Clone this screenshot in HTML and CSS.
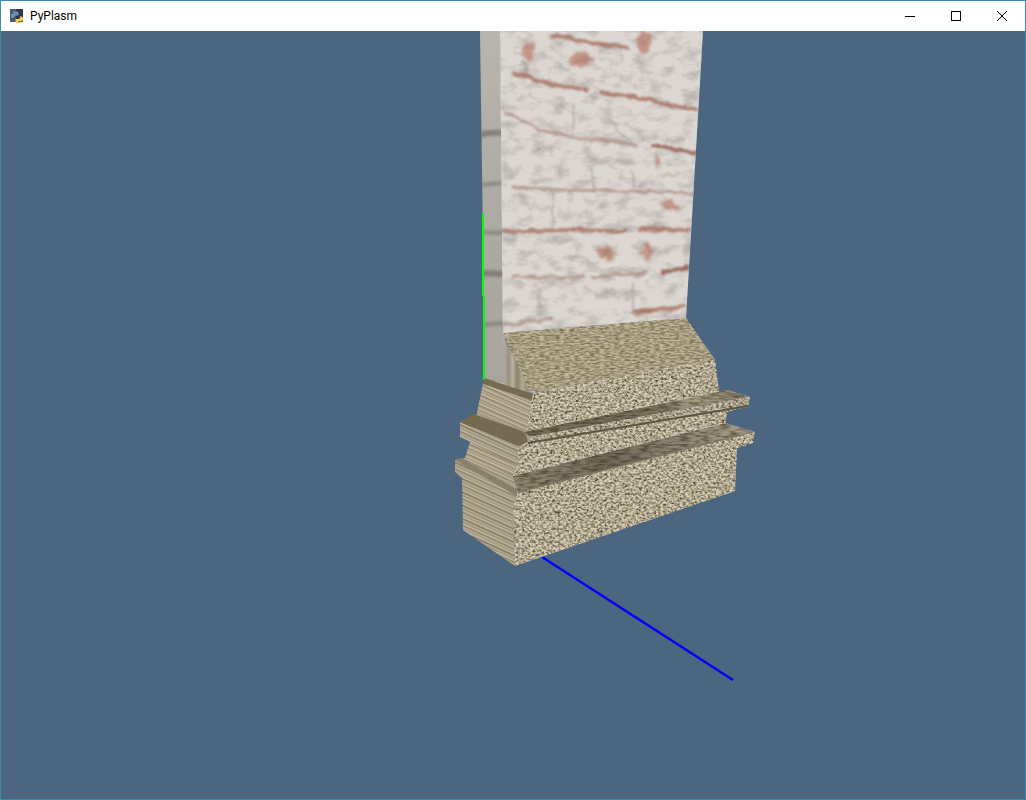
FILE: index.html
```html
<!DOCTYPE html>
<html lang="en">
<head>
<meta charset="utf-8">
<title>PyPlasm</title>
<link rel="stylesheet" href="styles.css">
</head>
<body>
<div class="window">
  <header class="titlebar">
    <svg class="app-icon" width="16" height="16" viewBox="0 0 16 16">
      <rect x="1" y="1" width="13" height="13" rx="1" fill="#27384f"/>
      <rect x="1" y="1" width="6" height="13" fill="#4a5a6e"/>
      <path d="M4 3.500h4a1.500 1.500 0 0 1 1.500 1.500v2.500H6.500A1.500 1.500 0 0 0 5 9v1H3.500A1.500 1.500 0 0 1 2 8.500V7a1.500 1.500 0 0 1 1.500-1.500H7V5H4z" fill="#6f93b8"/>
      <path d="M12 15H8a1.500 1.500 0 0 1-1.500-1.500V11h3A1.500 1.500 0 0 0 11 9.500V8.500h1.500A1.500 1.500 0 0 1 14 10v1.500a1.500 1.500 0 0 1-1.500 1.500H9v.5h3z" fill="#f4cf4e"/>
    </svg>
    <span class="title">PyPlasm</span>
    <div class="controls">
      <div class="control"><svg width="12" height="12" viewBox="0 0 12 12"><path d="M1 6.500h10" stroke="#000" fill="none"/></svg></div>
      <div class="control"><svg width="12" height="12" viewBox="0 0 12 12"><rect x="1.500" y="1.500" width="9" height="9" stroke="#000" fill="none"/></svg></div>
      <div class="control"><svg width="12" height="12" viewBox="0 0 12 12"><path d="M1 1l10 10M11 1L1 11" stroke="#000" fill="none"/></svg></div>
    </div>
  </header>
  <main class="viewport">
    <svg class="scene" width="1024" height="768" viewBox="1 31 1024 768">
      <defs>
        <filter id="stone" filterUnits="userSpaceOnUse" x="440" y="300" width="330" height="280" color-interpolation-filters="sRGB">
          <feTurbulence type="fractalNoise" baseFrequency="0.36 0.46" numOctaves="2" seed="7" result="n"/>
          <feColorMatrix in="n" type="matrix" values="1.250 0 0 0 0.2  1.250 0 0 0 0.19  1.250 0 0 0 0.17  0 0 0 0 1" result="g"/>
          <feBlend in="SourceGraphic" in2="g" mode="multiply" result="b"/>
          <feTurbulence type="fractalNoise" baseFrequency="0.28 0.33" numOctaves="2" seed="21" result="m"/>
          <feColorMatrix in="m" type="matrix" values="0 0 0 0 0.36  0 0 0 0 0.3  0 0 0 0 0.2  7 0 0 0 -4.550" result="speck"/>
          <feMerge result="t"><feMergeNode in="b"/><feMergeNode in="speck"/></feMerge>
          <feComposite in="t" in2="SourceGraphic" operator="in"/>
        </filter>
        <filter id="washtex" filterUnits="userSpaceOnUse" x="440" y="300" width="330" height="280" color-interpolation-filters="sRGB">
          <feTurbulence type="fractalNoise" baseFrequency="0.2 0.6" numOctaves="2" seed="5" result="n"/>
          <feColorMatrix in="n" type="matrix" values="0.8 0 0 0 0.45  0.8 0 0 0 0.44  0.8 0 0 0 0.42  0 0 0 0 1" result="g"/>
          <feBlend in="SourceGraphic" in2="g" mode="multiply" result="b"/>
          <feComposite in="b" in2="SourceGraphic" operator="in"/>
        </filter>
        <filter id="strip" filterUnits="userSpaceOnUse" x="440" y="300" width="330" height="280" color-interpolation-filters="sRGB">
          <feTurbulence type="fractalNoise" baseFrequency="0.1 0.45" numOctaves="2" seed="3" result="n"/>
          <feColorMatrix in="n" type="matrix" values="1 0 0 0 0.4  1 0 0 0 0.39  1 0 0 0 0.37  0 0 0 0 1" result="g"/>
          <feBlend in="SourceGraphic" in2="g" mode="multiply" result="b"/>
          <feComposite in="b" in2="SourceGraphic" operator="in"/>
        </filter>
        <filter id="plaster" filterUnits="userSpaceOnUse" x="495" y="31" width="215" height="310" color-interpolation-filters="sRGB">
          <feTurbulence type="fractalNoise" baseFrequency="0.06 0.09" numOctaves="3" seed="11" result="n"/>
          <feColorMatrix in="n" type="matrix" values="0.42 0 0 0 0.77  0.42 0 0 0 0.765  0.42 0 0 0 0.76  0 0 0 0 1" result="g"/>
          <feBlend in="SourceGraphic" in2="g" mode="multiply" result="b"/>
          <feComposite in="b" in2="SourceGraphic" operator="in"/>
        </filter>
        <filter id="rough" filterUnits="userSpaceOnUse" x="495" y="25" width="215" height="320">
          <feTurbulence type="fractalNoise" baseFrequency="0.09" numOctaves="2" seed="4" result="w"/>
          <feDisplacementMap in="SourceGraphic" in2="w" scale="6" xChannelSelector="R" yChannelSelector="G"/>
          <feGaussianBlur stdDeviation="1"/>
        </filter>
        <filter id="roughblur" filterUnits="userSpaceOnUse" x="495" y="25" width="215" height="320">
          <feTurbulence type="fractalNoise" baseFrequency="0.12" numOctaves="2" seed="9" result="w"/>
          <feDisplacementMap in="SourceGraphic" in2="w" scale="12" xChannelSelector="R" yChannelSelector="G"/>
          <feGaussianBlur stdDeviation="1.500"/>
        </filter>
        <filter id="blur1" filterUnits="userSpaceOnUse" x="470" y="25" width="50" height="360"><feGaussianBlur stdDeviation="1.500"/></filter>
        <clipPath id="wallclip"><polygon points="500,31 703,31 686,318 503,333"/></clipPath>
        <clipPath id="sideclip"><polygon points="480,31 500,31 505,340 507,382 485,380"/></clipPath>
        <linearGradient id="sidegrad" x1="0" y1="31" x2="0" y2="380" gradientUnits="userSpaceOnUse">
          <stop offset="0" stop-color="#b9b5ad"/>
          <stop offset=".5" stop-color="#aeaba4"/>
          <stop offset="1" stop-color="#a8a59f"/>
        </linearGradient>
        <linearGradient id="vstripes" x1="503" y1="0" x2="531" y2="0" gradientUnits="userSpaceOnUse">
          <stop offset="0" stop-color="#b9b2a0"/>
          <stop offset=".2" stop-color="#989080"/>
          <stop offset=".35" stop-color="#bdb29a"/>
          <stop offset=".5" stop-color="#8a826e"/>
          <stop offset=".7" stop-color="#b3a990"/>
          <stop offset=".85" stop-color="#988e78"/>
          <stop offset="1" stop-color="#a99f86"/>
        </linearGradient>
        <linearGradient id="stripe1" x1="0" y1="0" x2="-4" y2="9" gradientUnits="userSpaceOnUse" spreadMethod="repeat">
          <stop offset="0" stop-color="#ada287"/>
          <stop offset=".15" stop-color="#c3b89f"/>
          <stop offset=".28" stop-color="#938870"/>
          <stop offset=".42" stop-color="#b9ae94"/>
          <stop offset=".55" stop-color="#a1967c"/>
          <stop offset=".7" stop-color="#cbc1a8"/>
          <stop offset=".85" stop-color="#8f846b"/>
          <stop offset="1" stop-color="#ada287"/>
        </linearGradient>
        <linearGradient id="stripe2" x1="0" y1="0" x2="-5" y2="11" gradientUnits="userSpaceOnUse" spreadMethod="repeat">
          <stop offset="0" stop-color="#a59b85"/>
          <stop offset=".12" stop-color="#bfb69e"/>
          <stop offset=".25" stop-color="#7f7561"/>
          <stop offset=".38" stop-color="#b7ad95"/>
          <stop offset=".5" stop-color="#9a907a"/>
          <stop offset=".62" stop-color="#c3baa3"/>
          <stop offset=".75" stop-color="#8d836d"/>
          <stop offset=".88" stop-color="#b3a890"/>
          <stop offset="1" stop-color="#a59b85"/>
        </linearGradient>
        <linearGradient id="ledgegrad" x1="518" y1="0" x2="755" y2="0" gradientUnits="userSpaceOnUse">
          <stop offset="0" stop-color="#8d8470"/>
          <stop offset=".28" stop-color="#7e7663"/>
          <stop offset=".34" stop-color="#6f6756"/>
          <stop offset=".7" stop-color="#8f8775"/>
          <stop offset="1" stop-color="#a89f8a"/>
        </linearGradient>
        <linearGradient id="capgrad" x1="523" y1="0" x2="750" y2="0" gradientUnits="userSpaceOnUse">
          <stop offset="0" stop-color="#766b56"/>
          <stop offset=".6" stop-color="#7b715c"/>
          <stop offset=".75" stop-color="#a89d84"/>
          <stop offset="1" stop-color="#857b66"/>
        </linearGradient>
      </defs>

      <!-- wall side -->
      <polygon points="480,31 500,31 505,340 507,382 485,380" fill="url(#sidegrad)"/>
      <g clip-path="url(#sideclip)">
        <g filter="url(#blur1)">
          <path class="side-band" d="M478 135Q490 132 504 133"/>
          <path class="side-band thin" d="M478 185L504 183"/>
          <path class="side-band thin" d="M478 232L504 233"/>
          <path class="side-band" d="M478 273L504 274"/>
          <path class="side-band thin" d="M478 325L506 323"/>
        </g>
      </g>

      <!-- axes -->
      <path class="axis-green" d="M482.500 213V296M483.500 296V380"/>
      <path class="axis-blue" d="M542 557L733 680"/>

      <!-- wall front -->
      <polygon class="wall" points="500,31 703,31 686,318 503,333" filter="url(#plaster)"/>
      <g clip-path="url(#wallclip)">
        <g class="stains" filter="url(#roughblur)">
          <ellipse cx="529" cy="50" rx="7" ry="10"/>
          <ellipse cx="644" cy="42" rx="8" ry="11"/>
          <ellipse cx="581" cy="60" rx="11" ry="7"/>
          <ellipse cx="670" cy="206" rx="9" ry="5"/>
          <ellipse cx="606" cy="252" rx="9" ry="7"/>
          <ellipse cx="648" cy="251" rx="6" ry="9"/>
          <ellipse cx="657" cy="162" rx="3" ry="6"/>
          <ellipse cx="645" cy="312" rx="10" ry="3"/>
          <ellipse cx="655" cy="230" rx="12" ry="2"/>
        </g>
        <g class="mortar" filter="url(#rough)">
          <path d="M553 35L590 42L627 48"/>
          <path d="M515 73L550 84L587 90"/>
          <path d="M602 92L650 100L697 110"/>
          <path class="faint" d="M507 113L540 130L573 137L637 145"/>
          <path class="dark" d="M653 146L695 152"/>
          <path class="faint" d="M513 187L560 190L620 191L693 193"/>
          <path d="M502 232L560 230L627 231"/>
          <path d="M640 229L690 230"/>
          <path class="faint" d="M513 277L583 277"/>
          <path class="faint" d="M593 277L647 273"/>
          <path class="dark" d="M663 272L688 267"/>
          <path class="faint" d="M503 325L553 318"/>
          <path d="M633 312L685 307"/>
          <path class="thin" d="M553 193L553 227"/>
          <path class="thin" d="M633 283L633 313"/>
          <path class="thin" d="M540 287L540 317"/>
          <path class="thin" d="M575 105L572 130"/>
          <path class="thin" d="M524 60L528 75"/>
          <path class="thin" d="M632 170L635 187"/>
          <path class="thin" d="M590 170L596 188"/>
          <path class="thin" d="M610 120L625 140"/>
        </g>
      </g>

      <!-- pedestal: side faces -->
      <polygon points="503,335 531,393 485,380 507,382" fill="url(#vstripes)"/>
      <polygon class="under" points="485,380 533,397 530,442 520,447 518,466 512,478 470,442"/>
      <polygon points="483,383 533,400 527,432 477,413" fill="url(#stripe1)"/>
      <polygon points="476,425 525,445 519,466 470,442" fill="url(#stripe1)"/>
      <polygon points="470,442 520,465 512,478 465,458" fill="url(#stripe1)"/>
      <polygon points="460,422 520,447 518,466 460,437" fill="url(#stripe2)"/>
      <polygon points="465,458 512,475 518,492 455,460" fill="url(#stripe2)"/>
      <polygon points="455,460 518,492 513,508 515,566 463,530 462,478 455,472" fill="url(#stripe2)"/>
      <polygon class="ledge-dark" points="485,378 534,395 534,401 483,384"/>
      <polygon class="ledge-dark" points="460,422 473,414 525,432 528,442 520,447"/>
      <polygon class="ledge-mid" points="455,460 460,458 519,490 518,497"/>

      <!-- pedestal: front faces, back to front -->
      <polygon class="wash" points="503,333 686,318 715,360 667,370 531,393 530,392" filter="url(#washtex)"/>
      <g filter="url(#stone)">
        <polygon class="face" points="533,393 667,368 715,360 719,392 727,392 527,432"/>
        <polygon class="face" points="518,447 530,441 748,406 727,412 725,425 512,478 518,465"/>
        <polygon class="face" points="518,491 755,431 753,443 737,448 735,491 515,566 513,508"/>
      </g>
      <g filter="url(#strip)">
        <polygon fill="url(#capgrad)" points="523,432 727,390 750,397 530,437"/>
        <polygon fill="url(#ledgegrad)" points="512,476 725,423 755,432 518,492"/>
      </g>
      <polygon class="face-band" points="530,437 750,397 748,407 530,442" filter="url(#stone)"/>
      <polygon class="strip-line" points="528,442 748,405 748,407 528,444"/>
      <polygon class="strip-line soft" points="518,491 755,431 755,432 518,493"/>
    </svg>
  </main>
</div>
</body>
</html>
```

FILE: styles.css
```css
html, body {
  margin: 0;
  height: 100%;
  overflow: hidden;
}

.window {
  box-sizing: border-box;
  width: 1026px;
  height: 800px;
  display: flex;
  flex-direction: column;
  border: 1px solid #3b8dab;
  background: #4c6680;
}

.titlebar {
  height: 30px;
  flex: none;
  display: flex;
  align-items: center;
  background: #fff;
  font: 12px Roboto, "Liberation Sans", sans-serif;
  color: #000;
}

.app-icon {
  margin-left: 8px;
  flex: none;
}

.title {
  margin-left: 5px;
}

.controls {
  margin-left: auto;
  display: flex;
  height: 100%;
}

.control {
  width: 46px;
  display: flex;
  align-items: center;
  justify-content: center;
}

.viewport {
  flex: 1;
  min-height: 0;
  background: #4c6680;
}

.scene {
  display: block;
}

.axis-green {
  fill: none;
  stroke: #00ff00;
  stroke-width: 2;
  shape-rendering: crispEdges;
}

.axis-blue {
  fill: none;
  stroke: #0000ff;
  stroke-width: 2.500;
}

.side-band {
  fill: none;
  stroke: #6f6a66;
  stroke-width: 6;
  opacity: .7;
}

.side-band.thin {
  stroke-width: 4;
  opacity: .55;
}

.wall {
  fill: #dcd7d3;
}

.stains {
  fill: #a8543f;
  opacity: .5;
}

.mortar {
  fill: none;
  stroke: #a5705f;
  stroke-width: 4;
  stroke-linecap: round;
  opacity: .8;
}

.mortar .faint {
  stroke: #ad9186;
  stroke-width: 3;
}

.mortar .dark {
  stroke: #8d5648;
}

.mortar .thin {
  stroke: #a59c94;
  stroke-width: 1.500;
}

.under {
  fill: #a59a80;
}

.ledge-dark {
  fill: #75694f;
}

.ledge-mid {
  fill: #8a7f69;
}

.wash {
  fill: #c3b89a;
}

.face {
  fill: #d8cfb6;
}

.face-band {
  fill: #d0c7ae;
}

.strip-line {
  fill: #5d523f;
}

.strip-line.soft {
  fill: #7d735e;
}
```
